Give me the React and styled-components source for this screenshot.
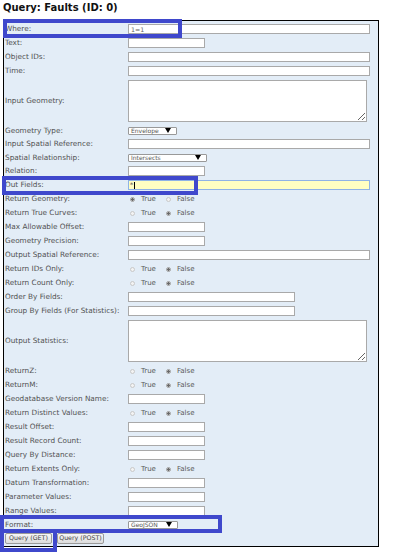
import React from "react";
import styled, { createGlobalStyle } from "styled-components";

const GlobalStyle = createGlobalStyle`
  html, body {
    margin: 0;
    padding: 0;
    background: #fff;
  }
  body {
    font-family: "DejaVu Sans", Verdana, sans-serif;
  }
`;

const Page = styled.div`
  position: relative;
  width: 394px;
  height: 555px;
  overflow: hidden;
`;

const Heading = styled.h2`
  margin: 0;
  padding: 1px 0 0 3px;
  height: 20px;
  box-sizing: border-box;
  font-size: 10px;
  line-height: 14px;
  font-weight: bold;
  color: #111;
`;

const Panel = styled.div`
  margin-left: 3px;
  width: 376px;
  box-sizing: border-box;
  border: 1px solid #000;
  background: #e3edf7;
  padding-top: 1px;
`;

const Row = styled.div`
  display: grid;
  grid-template-columns: 124px 1fr;
  align-items: center;
  height: ${(p) => p.$h || 14}px;
`;

const Label = styled.div`
  padding-left: 1px;
  font-size: 7.3px;
  line-height: 1;
  color: #525252;
  white-space: nowrap;
`;

const TextInput = styled.input`
  display: block;
  box-sizing: border-box;
  width: ${(p) => p.$w}px;
  height: 10px;
  margin: 0;
  padding: 0 2px;
  border: 1px solid #a9a9a9;
  background: #fff;
  font: 6.3px "DejaVu Sans", sans-serif;
  color: #666;
  outline: none;
`;

const FocusedInput = styled.div`
  display: flex;
  align-items: center;
  box-sizing: border-box;
  width: 242px;
  height: 10px;
  padding-left: 1px;
  border: 1px solid #8fb3e6;
  background: #ffffc2;
  font-size: 6.3px;
  line-height: 1;
  color: #555;
`;

const Caret = styled.span`
  width: 1px;
  height: 7px;
  margin-left: 1px;
  background: #000;
`;

const TextArea = styled.textarea`
  display: block;
  box-sizing: border-box;
  width: 239px;
  height: 42px;
  margin: 0;
  padding: 0;
  border: 1px solid #a9a9a9;
  background: #fff;
  outline: none;
`;

const SelectBox = styled.div`
  display: flex;
  align-items: center;
  justify-content: space-between;
  box-sizing: border-box;
  width: ${(p) => p.$w}px;
  height: 8px;
  padding: 0 5px 0 2px;
  border: 1px solid #999;
  border-radius: 1px;
  background: #fff;
  font-size: 6px;
  line-height: 1;
  color: #555;
`;

const Arrow = styled.span`
  width: 0;
  height: 0;
  border-left: 3px solid transparent;
  border-right: 3px solid transparent;
  border-top: 5px solid #000;
`;

const RadioGroup = styled.div`
  display: flex;
  align-items: center;
  gap: 10px;
  padding-left: 2px;
`;

const RadioOption = styled.span`
  display: inline-flex;
  align-items: center;
  gap: 6px;
  font-size: 7px;
  line-height: 1;
  color: #5a5a5a;
`;

const RadioDot = styled.span`
  width: 5px;
  height: 5px;
  box-sizing: border-box;
  border-radius: 50%;
  border: 1px solid ${(p) => (p.$on ? "#a0a0a0" : "#c8c8c8")};
  background: ${(p) =>
    p.$on ? "radial-gradient(circle, #6a6a6a 0 1px, #d6d6d6 1.5px)" : "#f3f3f3"};
`;

const ButtonRow = styled.div`
  display: flex;
  align-items: flex-start;
  gap: 5px;
  height: 15px;
  padding: 2px 0 0 1px;
  box-sizing: border-box;
`;

const Button = styled.button`
  box-sizing: border-box;
  width: 47px;
  height: 11px;
  margin: 0;
  padding: 0;
  border: 1px solid #9a9a9a;
  border-radius: 2px;
  background: linear-gradient(#f7f7f7, #dcdcdc);
  font: 6.3px "DejaVu Sans", sans-serif;
  line-height: 1;
  color: #444;
`;

const Marker = styled.div`
  position: absolute;
  left: ${(p) => p.$x}px;
  top: ${(p) => p.$y}px;
  width: ${(p) => p.$w}px;
  height: ${(p) => p.$h}px;
  box-sizing: border-box;
  border: 4px solid #3f48cc;
  pointer-events: none;
`;

const FULL = 242;
const SHORT = 77;
const MEDIUM = 167;

const fields = [
  { label: "Where:", type: "input", w: FULL, value: "1=1" },
  { label: "Text:", type: "input", w: SHORT },
  { label: "Object IDs:", type: "input", w: FULL },
  { label: "Time:", type: "input", w: FULL },
  { label: "Input Geometry:", type: "area" },
  { label: "Geometry Type:", type: "select", w: 49, value: "Envelope" },
  { label: "Input Spatial Reference:", type: "input", w: FULL },
  { label: "Spatial Relationship:", type: "select", w: 79, value: "Intersects" },
  { label: "Relation:", type: "input", w: SHORT },
  { label: "Out Fields:", type: "focus", value: "*" },
  { label: "Return Geometry:", type: "radio", on: true },
  { label: "Return True Curves:", type: "radio", on: false },
  { label: "Max Allowable Offset:", type: "input", w: SHORT },
  { label: "Geometry Precision:", type: "input", w: SHORT },
  { label: "Output Spatial Reference:", type: "input", w: FULL },
  { label: "Return IDs Only:", type: "radio", on: false },
  { label: "Return Count Only:", type: "radio", on: false },
  { label: "Order By Fields:", type: "input", w: MEDIUM },
  { label: "Group By Fields (For Statistics):", type: "input", w: MEDIUM },
  { label: "Output Statistics:", type: "area" },
  { label: "ReturnZ:", type: "radio", on: false },
  { label: "ReturnM:", type: "radio", on: false },
  { label: "Geodatabase Version Name:", type: "input", w: SHORT },
  { label: "Return Distinct Values:", type: "radio", on: false },
  { label: "Result Offset:", type: "input", w: SHORT },
  { label: "Result Record Count:", type: "input", w: SHORT },
  { label: "Query By Distance:", type: "input", w: SHORT },
  { label: "Return Extents Only:", type: "radio", on: false },
  { label: "Datum Transformation:", type: "input", w: SHORT },
  { label: "Parameter Values:", type: "input", w: SHORT },
  { label: "Range Values:", type: "input", w: SHORT },
  { label: "Format:", type: "select", w: 50, value: "GeoJSON" },
];

const rowHeight = (type) => {
  if (type === "area") return 46;
  if (type === "select") return 13;
  return 14;
};

const Control = ({ field }) => {
  switch (field.type) {
    case "area":
      return <TextArea />;
    case "select":
      return (
        <SelectBox $w={field.w}>
          {field.value}
          <Arrow />
        </SelectBox>
      );
    case "focus":
      return (
        <FocusedInput>
          {field.value}
          <Caret />
        </FocusedInput>
      );
    case "radio":
      return (
        <RadioGroup>
          <RadioOption>
            <RadioDot $on={field.on} />
            True
          </RadioOption>
          <RadioOption>
            <RadioDot $on={!field.on} />
            False
          </RadioOption>
        </RadioGroup>
      );
    default:
      return <TextInput $w={field.w} defaultValue={field.value || ""} />;
  }
};

const App = () => {
  return (
    <Page>
      <GlobalStyle />
      <Heading>Query: Faults (ID: 0)</Heading>
      <Panel>
        {fields.map((f) => (
          <Row key={f.label} $h={rowHeight(f.type)}>
            <Label>{f.label}</Label>
            <div>
              <Control field={f} />
            </div>
          </Row>
        ))}
        <ButtonRow>
          <Button>Query (GET)</Button>
          <Button>Query (POST)</Button>
        </ButtonRow>
      </Panel>

      <Marker $x={3} $y={19} $w={179} $h={19} />
      <Marker $x={2} $y={176} $w={196} $h={19} />
      <Marker $x={0} $y={515} $w={222} $h={18} />
      <Marker $x={0} $y={529} $w={57} $h={23} />
    </Page>
  );
};

export default App;
